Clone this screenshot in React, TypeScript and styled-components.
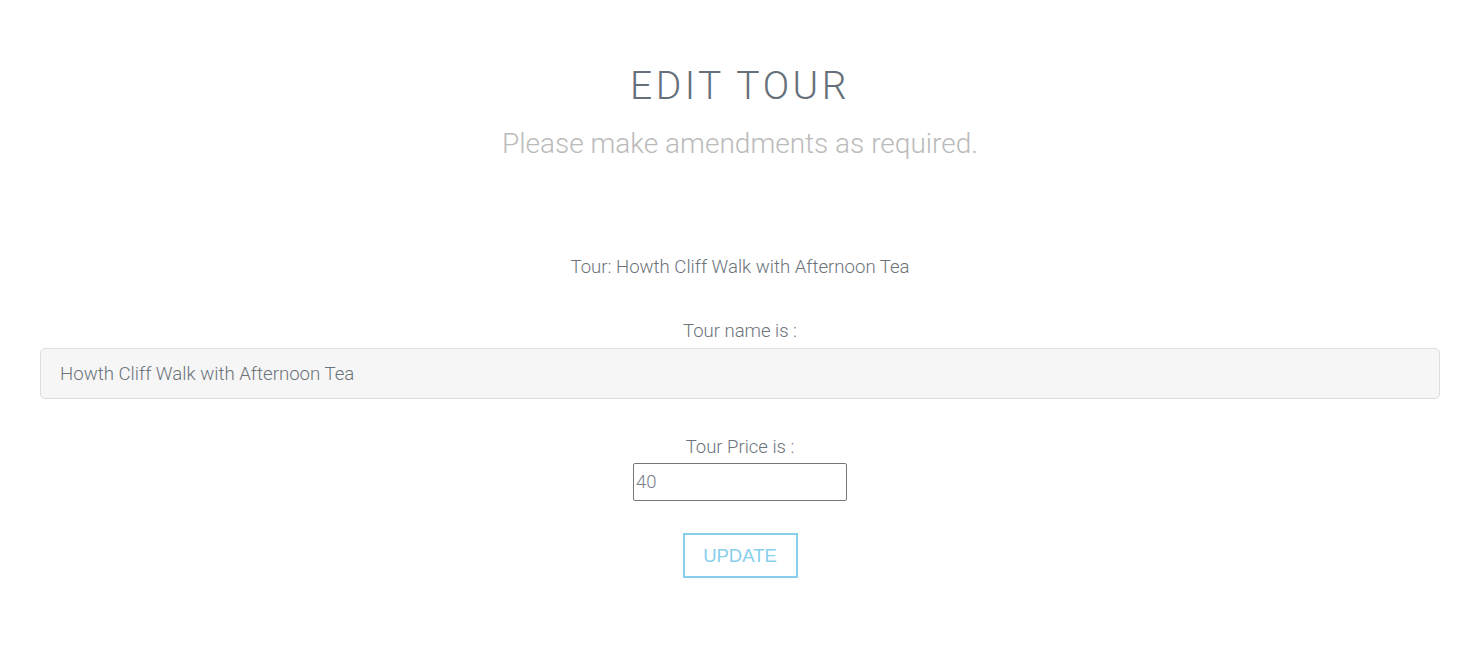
import React, { useState } from 'react';
import styled, { createGlobalStyle } from 'styled-components';

const GlobalStyle = createGlobalStyle`
	body {
		margin: 0;
		background: #fff;
		font-family: Roboto, 'Noto Sans', sans-serif;
		font-weight: 300;
		color: #6c757d;
	}
`;

const Page = styled.div`
	width: 1400px;
	margin-left: 40px;
	padding-top: 62px;
	display: flex;
	flex-direction: column;
	align-items: center;
`;

const Title = styled.h1`
	margin: 0;
	font-size: 39px;
	font-weight: 300;
	letter-spacing: 3.5px;
	line-height: 48px;
	color: #66707a;
	text-transform: uppercase;
`;

const Subtitle = styled.p`
	margin: 18px 0 0;
	font-size: 28px;
	font-weight: 300;
	line-height: 32px;
	color: #bbbbbb;
`;

const Form = styled.form`
	width: 100%;
	margin-top: 95px;
	display: flex;
	flex-direction: column;
	align-items: center;
`;

const TourLine = styled.p`
	margin: 0;
	font-size: 18.6px;
	line-height: 24px;
	color: #6c737a;
`;

const Label = styled.label<{ $gap?: number }>`
	margin-top: ${(p) => p.$gap ?? 40}px;
	font-size: 18.5px;
	line-height: 24px;
	color: #6c737a;
`;

const NameInput = styled.input`
	box-sizing: border-box;
	width: 100%;
	height: 51px;
	margin-top: 5px;
	padding: 0 19px;
	border: 1px solid #dedede;
	border-radius: 5px;
	background: #f6f6f6;
	font-family: Roboto, sans-serif;
	font-weight: 300;
	font-size: 18.65px;
	color: #6c737a;
	outline: none;
`;

const PriceInput = styled.input`
	box-sizing: border-box;
	width: 214px;
	height: 38px;
	margin-top: 4px;
	padding: 0 2px;
	border: 1px solid #767676;
	border-radius: 2px;
	background: #fff;
	font-family: Roboto, sans-serif;
	font-weight: 300;
	font-size: 18.5px;
	color: #7a8087;
	outline: none;
`;

const UpdateButton = styled.button`
	box-sizing: border-box;
	margin-top: 32px;
	width: 115px;
	height: 45px;
	border: 2px solid #87cfec;
	background: #fff;
	color: #87cfec;
	font-family: 'Liberation Sans', Arial, sans-serif;
	font-size: 18.5px;
	cursor: pointer;
`;

export default function App() {
	const [name, setName] = useState('Howth Cliff Walk with Afternoon Tea');
	const [price, setPrice] = useState('40');

	return (
		<>
			<GlobalStyle />
			<Page>
				<Title>Edit Tour</Title>
				<Subtitle>Please make amendments as required.</Subtitle>
				<Form onSubmit={(e) => e.preventDefault()}>
					<TourLine>Tour: Howth Cliff Walk with Afternoon Tea</TourLine>
					<Label htmlFor="tour-name">Tour name is :</Label>
					<NameInput id="tour-name" value={name} onChange={(e) => setName(e.target.value)} />
					<Label htmlFor="tour-price" $gap={36}>
						Tour Price is :
					</Label>
					<PriceInput id="tour-price" value={price} onChange={(e) => setPrice(e.target.value)} />
					<UpdateButton type="submit">UPDATE</UpdateButton>
				</Form>
			</Page>
		</>
	);
}
